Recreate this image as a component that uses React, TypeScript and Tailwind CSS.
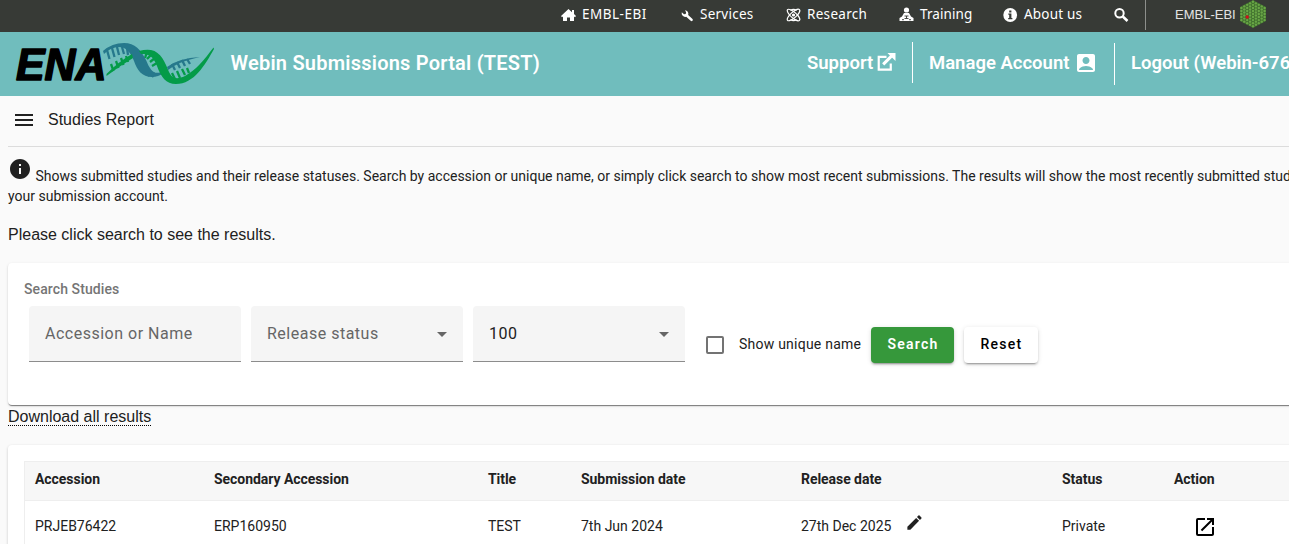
import type { ReactNode } from "react";
import { MdAccountBox, MdArrowDropDown, MdEdit, MdInfo, MdMenu, MdOpenInNew } from "react-icons/md";

const plex = "font-['Noto_Sans',sans-serif]";

function TopLink({ icon, label, width, text = "" }: { icon: ReactNode; label: string; width: string; text?: string }) {
  return (
    <a className={`flex shrink-0 items-center ${width}`}>
      <span className="w-[21px] shrink-0">{icon}</span>
      <span className={`whitespace-nowrap ${text}`}>{label}</span>
    </a>
  );
}

function HomeIcon() {
  return (
    <svg width="15" height="14" viewBox="0 0 15 14" fill="#fff">
      <path d="M7.500 1 0 8l1 1.200 1-.6V13h4V9.500h3V13h4V8.600l1 .6L15 8l-2-2V2h-2v2.300z" />
    </svg>
  );
}

function WrenchIcon() {
  return (
    <svg width="13" height="14" viewBox="0 0 13 14" fill="#fff">
      <path d="M4 2.200a3.600 3.600 0 0 1 3.200 4.700l4.300 4.200a1.200 1.200 0 0 1-1.800 1.700L5.200 8.800A3.600 3.600 0 0 1 .8 4.300l2.200 2 1.700-.4.400-1.600z" />
    </svg>
  );
}

function AtomIcon() {
  return (
    <svg width="15" height="14" viewBox="0 0 15 14" fill="none" stroke="#fff" strokeWidth="1.200">
      <ellipse cx="7.500" cy="7" rx="8" ry="2.800" transform="rotate(42 7.500 7)" />
      <ellipse cx="7.500" cy="7" rx="8" ry="2.800" transform="rotate(-42 7.500 7)" />
      <path d="M4.500 2.500Q7.500.3 10.500 2.500M4.500 11.500q3 2.200 6 0" />
      <circle cx="7.500" cy="7" r="1" fill="#fff" />
    </svg>
  );
}

function TrainingIcon() {
  return (
    <svg width="15" height="15" viewBox="0 0 15 15">
      <circle cx="7.500" cy="3" r="2.600" fill="#fff" />
      <path d="M5 6h5l2 3.500 2.500 1.500v3H.5v-3L3 9.500z" fill="#fff" />
      <path d="M5.500 9h4M5.500 11.500h4M7.500 9v2.500M3 12.700h2M10 12.700h2" stroke="#373a36" strokeWidth="0.900" />
    </svg>
  );
}

function InfoIcon() {
  return (
    <svg width="15" height="14" viewBox="0 0 15 14">
      <circle cx="7.200" cy="7" r="6.900" fill="#fff" />
      <path d="M6.200 2.500h2.200v2H6.200zM5.300 5.500h3.100v4.600h1v1.200H5.200v-1.200h1V6.700h-.9z" fill="#373a36" />
    </svg>
  );
}

function SearchIcon() {
  return (
    <svg width="15" height="14" viewBox="0 0 15 14" fill="none" stroke="#fff">
      <circle cx="5.500" cy="5.300" r="4.200" strokeWidth="2" />
      <path d="m8.800 8.500 4.700 4.500" strokeWidth="2.600" />
    </svg>
  );
}

const hexDots: { x: number; y: number; red: boolean }[] = [];
for (let col = -4; col <= 4; col++) {
  const count = 9 - Math.abs(col);
  for (let i = 0; i < count; i++) {
    hexDots.push({ x: 13 + col * 2.9, y: 14 + (i - (count - 1) / 2) * 3.05, red: col === -2 && i === 4 });
  }
}

function HexLogo() {
  return (
    <svg width="26" height="28" viewBox="0 0 26 28">
      <path d="M13 0 26 7v14l-13 7L0 21V7z" fill="#41702f" />
      {hexDots.map((d, i) => (
        <circle key={i} cx={d.x} cy={d.y} r={d.red ? 1.7 : 1.2} fill={d.red ? "#d0121b" : "#69a646"} />
      ))}
    </svg>
  );
}

function EnaLogo() {
  return (
    <svg width="206" height="52" viewBox="12 38 206 52" className="shrink-0">
      <text
        x="16"
        y="79.500"
        textLength="90.500"
        lengthAdjust="spacingAndGlyphs"
        fontSize="44.500"
        fontWeight="700"
        fontStyle="italic"
        stroke="#000"
        strokeWidth="1.600"
        strokeLinejoin="round"
        className="font-['Liberation_Sans',sans-serif]"
      >
        ENA
      </text>
      <g stroke="#26788c" strokeWidth="2.300" fill="none">
        <path d="m107 50 2.500 9M112 48l2.500 9M117 47l2 8M122 47l2 7M127 48l1 7" />
        <path d="m144 73 5-3M148 76l4-4M152 77l3-4M172 64l3 6M177 62l3 6M182 60l3 6M187 59l3 5" />
      </g>
      <g stroke="#049b48" strokeWidth="2.300" fill="none">
        <path d="m111 64 2.500 7M116 61l2.500 7M121 58l2.500 7M126 56l2 6" />
        <path d="m147 52-2 6M152 54l-5 5M155 58l-5 4M157 63l-5 3M172 73l3 6M177 71l3 7M182 69l3 6M187 68l2 5" />
      </g>
      <path
        d="M103 51Q112 43 124 43C135 43 141 50 146 60C150 70 154 75 161 72L164 73Q158 77 152 77C142 77 137 70 134 61C130 51 125 47 119 47Q111 47 104 54Z"
        fill="#26788c"
      />
      <path d="M106.500 74Q118 62 132 54L133 58Q120 66 106.500 76Z" fill="#049b48" />
      <path
        d="M139 51Q146 49 151 50C161 52 165 62 169 72C173 80 178 79 185 76C196 70 204 60 213.500 47.500L214 49C205 65 194 84 176 84C166 84 161 77 157 66C153 56 149 54 141 54Z"
        fill="#049b48"
      />
      <path d="M167 67Q179 58 200 57Q187 60 180 63Q173 66 168 70Z" fill="#26788c" />
    </svg>
  );
}

function ExternalIcon() {
  return (
    <svg width="19" height="18" viewBox="0 0 19 19" fill="none" stroke="#fff" className="mb-[2px]">
      <path d="M9.500 4H1.300v13.500H14V11" strokeWidth="2.300" />
      <path d="m6 12 9-9" strokeWidth="3.200" />
      <path d="M10.500 0H19v8.500z" fill="#fff" stroke="none" />
    </svg>
  );
}

function Field({ label, dark, select }: { label: string; dark?: boolean; select?: boolean }) {
  return (
    <div className="flex h-14 w-[212px] shrink-0 items-center justify-between rounded-t border-b border-[#8c8c8c] bg-[#f5f5f5] pr-[9px] pl-4">
      <span className={`text-base tracking-[0.5px] ${dark ? "text-[#212121]" : "text-[#666]"}`}>{label}</span>
      {select && <MdArrowDropDown size={24} color="#666" />}
    </div>
  );
}

const columns = "grid grid-cols-[179px_274px_93px_220px_261px_112px_200px]";
const headings = ["Accession", "Secondary Accession", "Title", "Submission date", "Release date", "Status", "Action"];

export default function App() {
  return (
    <div className="h-[544px] w-[1289px] overflow-hidden bg-[#fafafa] font-[Roboto,sans-serif] text-[#212121]">
      <nav className={`flex h-8 items-start bg-[#373a36] pl-[561px] text-[13.5px] text-white ${plex}`}>
        <div className="flex h-[29px] items-center">
          <TopLink icon={<HomeIcon />} label="EMBL-EBI" width="w-[120px]" text="tracking-[0.5px]" />
          <a className="flex w-[105px] shrink-0 items-center">
            <span className="w-[19px] shrink-0"><WrenchIcon /></span>
            <span className="tracking-[0.25px]">Services</span>
          </a>
          <TopLink icon={<AtomIcon />} label="Research" width="w-[113px]" text="tracking-[0.3px]" />
          <TopLink icon={<TrainingIcon />} label="Training" width="w-[104px]" text="tracking-[0.1px]" />
          <TopLink icon={<InfoIcon />} label="About us" width="w-[111px]" text="tracking-[0.2px]" />
          <SearchIcon />
        </div>
        <div className="ml-4 flex h-[30px] items-center border-l border-[#8d8f8c] pb-[2px] pl-[29px]">
          <span className="mt-[2px] w-[65px] text-[13px] tracking-[0px] whitespace-nowrap text-[#e3e3e3] font-['Liberation_Sans',sans-serif]">EMBL-EBI</span>
          <HexLogo />
        </div>
      </nav>

      <header className="flex h-16 items-center bg-[#70bdbd] pl-[12px] text-[20px] font-semibold whitespace-nowrap text-white">
        <EnaLogo />
        <h1 className="ml-[12.500px] w-[576.500px] shrink-0 pb-[2px] tracking-[0.22px]">Webin Submissions Portal (TEST)</h1>
        <a className="mb-[3px] flex h-[41px] w-[106px] shrink-0 items-center gap-1 border-r border-white pt-px text-[18.500px]">
          <span className="pt-[2px]">Support</span> <ExternalIcon />
        </a>
        <a className="flex h-[42px] w-[202px] shrink-0 items-center gap-[5px] border-r border-white pb-px pl-4 text-[18.500px]">
          <span className="pt-px">Manage Account</span> <MdAccountBox size={24} className="mb-px" />
        </a>
        <a className="pl-4 text-[18.500px]">Logout (Webin-676</a>
      </header>

      <main className="pl-2">
        <div className="flex h-[51px] items-center border-b border-[#dcdcdc] pb-[2px] pl-1">
          <MdMenu size={24} />
          <h2 className="ml-3 text-base font-['Liberation_Sans',sans-serif]">Studies Report</h2>
        </div>

        <p className="mt-[10px] text-sm leading-5 whitespace-nowrap">
          <MdInfo size={24} className="mr-[3.500px] inline-block align-baseline" />
          <span className="tracking-[-0.003px]">Shows submitted studies and their release statuses. Search by accession or unique name, or simply click search to show most recent submissions. The results will show the most recently submitted stud</span>
          <br />
          your submission account.
        </p>
        <p className="mt-[17px] text-base leading-6 font-['Liberation_Sans',sans-serif]">Please click search to see the results.</p>

        <section className="mt-[16px] h-[142px] w-[1400px] rounded bg-white px-4 pt-4 shadow-[0_2px_1px_-1px_rgba(0,0,0,0.35),0_1px_1px_rgba(0,0,0,0.18),0_1px_3px_rgba(0,0,0,0.12)]">
          <h3 className="-mt-px text-sm font-medium leading-[22px] tracking-[0.1px] text-[#757575]">Search Studies</h3>
          <div className="mt-[6px] flex gap-[10px] pl-[5px]">
            <Field label="Accession or Name" />
            <Field label="Release status" select />
            <Field label="100" dark select />
            <div className="mt-5 ml-[11px] flex h-9 w-[155px] items-center">
              <span className="mt-[2px] size-[18px] shrink-0 rounded-[2px] border-2 border-[#737373]" />
              <label className="ml-[15px] text-sm tracking-[0.23px] whitespace-nowrap">Show unique name</label>
            </div>
            <button className="mt-[21px] h-9 w-[83px] rounded bg-[#36983b] pb-[2px] pl-px text-sm font-semibold tracking-[1.25px] text-white shadow-[0_3px_1px_-2px_rgba(0,0,0,0.2),0_2px_2px_rgba(0,0,0,0.14),0_1px_5px_rgba(0,0,0,0.12)]">Search</button>
            <button className="mt-[21px] h-9 w-[74px] rounded bg-white pb-[2px] pl-px text-sm font-medium tracking-[1.25px] text-black shadow-[0_3px_1px_-2px_rgba(0,0,0,0.2),0_2px_2px_rgba(0,0,0,0.14),0_1px_5px_rgba(0,0,0,0.12)]">Reset</button>
          </div>
        </section>

        <div className="flex h-10 items-start pt-[2px]">
          <a className="border-b border-dotted border-black pt-px text-base leading-[17px] font-['Liberation_Sans',sans-serif]">Download all results</a>
        </div>

        <section className="h-40 w-[1400px] rounded bg-white px-4 pt-4 shadow-[0_1px_3px_rgba(0,0,0,0.2)]">
          <div className="border border-[#eee] text-sm">
            <div className={`h-[39px] items-center border-b border-[#eee] bg-[#f7f7f7] pb-[4px] font-bold tracking-[-0.05px] ${columns}`}>
              {headings.map((h) => <span key={h} className="pl-[10px]">{h}</span>)}
            </div>
            <div className={`h-[51px] items-center ${columns}`}>
              <span className="pb-[2px] pl-[10px]">PRJEB76422</span>
              <span className="pb-[2px] pl-[10px]">ERP160950</span>
              <span className="pb-[2px] pl-[10px]">TEST</span>
              <span className="pb-[2px] pl-[10px]">7th Jun 2024</span>
              <span className="flex items-center pb-[2px] pl-[10px]">27th Dec 2025<MdEdit size={19} className="mb-[6px] ml-[14px]" /></span>
              <span className="pb-[2px] pl-[10px]">Private</span>
              <span className="pl-[29px]"><MdOpenInNew size={24} color="#000" /></span>
            </div>
          </div>
        </section>
      </main>
    </div>
  );
}
